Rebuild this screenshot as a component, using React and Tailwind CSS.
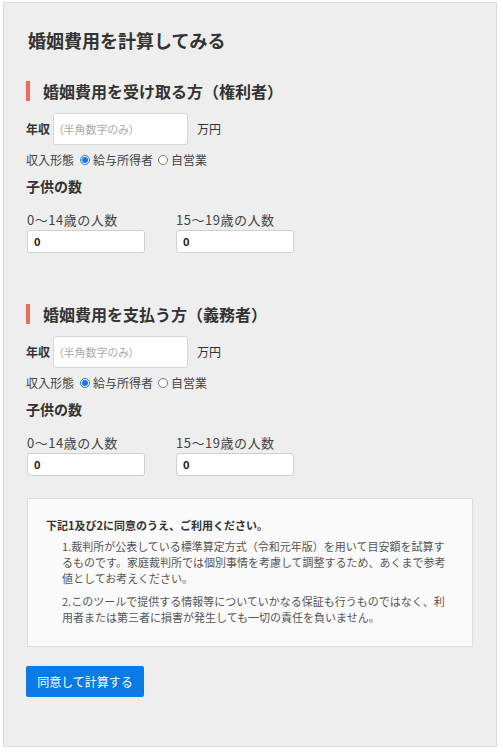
// App.jsx — 婚姻費用 calculator form

const FONT = { fontFamily: '"Noto Sans CJK JP", "Noto Sans", sans-serif' };

const Radio = ({ checked, label }) => (
	<label className="flex items-center gap-[3px]">
		{checked ? (
			<span className="w-[10px] h-[10px] rounded-full border-[1px] border-[#1a73e8] bg-white flex items-center justify-center">
				<span className="w-[6px] h-[6px] rounded-full bg-[#1a73e8]" />
			</span>
		) : (
			<span className="w-[10px] h-[10px] rounded-full border-[1px] border-[#777] bg-white" />
		)}
		<span>{label}</span>
	</label>
);

function PartySection({ title, headingMargin }) {
	return (
		<div className="flex flex-col">
			{/* red-bar heading */}
			<h2
				className={`${headingMargin} border-l-4 border-[#ee6a5a] pl-[13px] text-[16px] leading-[20px] font-bold text-[#333]`}
			>
				{title}
			</h2>

			{/* annual income */}
			<div className="mt-[12px] flex items-center h-[32px]">
				<span className="text-[12px] font-bold text-[#333] w-[27px]">年収</span>
				<div className="w-[135px] h-[32px] bg-white border border-[#d6d6d6] rounded-[3px] flex items-center pl-[4px] text-[11px] text-[#aaa] [font-feature-settings:'palt']">
					（半角数字のみ）
				</div>
				<span className="ml-[9px] text-[12px] text-[#333]">万円</span>
			</div>

			{/* income type */}
			<div className="mt-[6px] flex items-center gap-[5px] text-[12px] leading-[18px] text-[#444]">
				<span className="mr-[1px]">収入形態</span>
				<Radio checked label="給与所得者" />
				<Radio label="自営業" />
			</div>

			<h3 className="mt-[7px] text-[14px] leading-[20px] font-bold text-[#333]">子供の数</h3>

			{/* children counts */}
			<div className="mt-[15px] ml-px flex gap-[31px]">
				{['0〜14歳の人数', '15〜19歳の人数'].map((label) => (
					<div key={label} className="flex flex-col">
						<span className="text-[13px] leading-[18px] text-[#444] tracking-[0.04em]">{label}</span>
						<div className="mt-px w-[118px] h-[23px] bg-white border border-[#cfcfcf] rounded-[3px] flex items-center pl-[6px] text-[11px] font-bold text-[#222]">
							0
						</div>
					</div>
				))}
			</div>
		</div>
	);
}

export default function App() {
	return (
		<div className="min-h-screen bg-white pt-[2px] pl-[3px]" style={FONT}>
			<div className="w-[494px] h-[745px] bg-[#eeeeee] border border-[#dcdcdc] px-[22px] pt-[24px] flex flex-col">
				<h1 className="ml-[2px] text-[18px] leading-[27px] font-bold text-[#333]">
					婚姻費用を計算してみる
				</h1>

				<PartySection title="婚姻費用を受け取る方（権利者）" headingMargin="mt-[27px]" />
				<PartySection title="婚姻費用を支払う方（義務者）" headingMargin="mt-[51px]" />

				{/* agreement notice */}
				<div className="mt-[22px] ml-px w-[446px] h-[149px] bg-[#fafafa] border border-[#dedede] pl-[18px] pr-[20px] pt-[17px] text-[#333]">
					<p className="text-[11px] leading-[18px] font-bold">
						下記1及び2に同意のうえ、ご利用ください。
					</p>
					<ol className="ml-[16px] text-[11px] leading-[16px] text-[#555]">
						<li className="mt-[4px]">
							1.裁判所が公表している標準算定方式（令和元年版）を用いて目安額を試算するものです。家庭裁判所では個別事情を考慮して調整するため、あくまで参考値としてお考えください。
						</li>
						<li className="mt-[7px]">
							2.このツールで提供する情報等についていかなる保証も行うものではなく、利用者または第三者に損害が発生しても一切の責任を負いません。
						</li>
					</ol>
				</div>

				<button className="mt-[19px] w-[118px] h-[31px] bg-[#0b7be3] rounded-[2px] text-white text-[12px] flex items-center justify-center">
					同意して計算する
				</button>
			</div>
		</div>
	);
}
